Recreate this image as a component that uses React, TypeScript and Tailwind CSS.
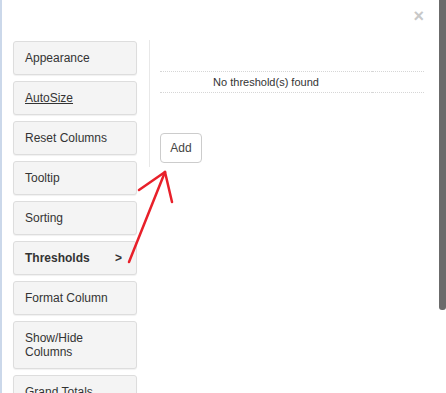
import React from 'react'

const items = [
  { label: 'Appearance' },
  { label: 'AutoSize', underline: true },
  { label: 'Reset Columns' },
  { label: 'Tooltip' },
  { label: 'Sorting' },
  { label: 'Thresholds', active: true },
  { label: 'Format Column' },
  { label: 'Show/Hide Columns' },
  { label: 'Grand Totals' },
]

function MenuButton({ label, underline, active }: { label: string; underline?: boolean; active?: boolean }) {
  return (
    <div
      className={
        'flex w-[124px] shrink-0 items-start justify-between rounded-[3px] border border-[#dddddd] bg-[#f4f4f4] py-[9px] pl-[11px] pr-[14px] text-[12px] leading-[14px] text-[#333] shadow-[0_1px_1px_rgba(0,0,0,0.06)] ' +
        (active ? 'font-bold' : '')
      }
    >
      <span className={underline ? 'underline' : ''}>
        {label === 'Show/Hide Columns' ? (
          <>
            Show/Hide
            <br />
            Columns
          </>
        ) : (
          label
        )}
      </span>
      {active && <span>&gt;</span>}
    </div>
  )
}

export default function App() {
  return (
    <div className="relative h-[393px] w-[446px] overflow-hidden border-l-2 border-[#cbd8ea] bg-white font-['Liberation_Sans',Arial,sans-serif]">
      <button className="absolute right-[22px] top-[5px] text-[18px] font-bold leading-[22px] text-[#c8c8c8]">×</button>
      <div className="absolute right-0 top-0 h-[310px] w-[7px] rounded-b-[3px] bg-[#6b6b6b]" />

      <div className="flex items-start pl-[11px] pt-[41px]">
        <div className="flex flex-col gap-[6px]">
          {items.map((it) => (
            <MenuButton key={it.label} {...it} />
          ))}
        </div>

        <div className="-mt-px ml-[12px] h-[127px] border-l border-[#e8e8e8] pl-[10px] pt-[31px]">
          <table className="w-[264px] border-collapse text-[11px] text-[#333]">
            <tbody>
              <tr className="border-y border-dotted border-[#d6d6d6]">
                <td className="h-[20px] w-[212px] p-0 text-center leading-[20px]">No threshold(s) found</td>
                <td className="p-0" />
              </tr>
            </tbody>
          </table>
          <button className="mt-[40px] h-[30px] w-[42px] rounded-[4px] border border-[#cccccc] bg-white text-[12px] text-[#444]">
            Add
          </button>
        </div>
      </div>

      <svg className="pointer-events-none absolute left-0 top-0" width="446" height="393">
        <g stroke="#e8202a" strokeWidth="2.5" strokeLinecap="round" fill="none">
          <line x1="127" y1="262" x2="163" y2="172" />
          <line x1="163" y1="172" x2="137" y2="190" />
          <line x1="163" y1="172" x2="170" y2="202" />
        </g>
      </svg>
    </div>
  )
}
